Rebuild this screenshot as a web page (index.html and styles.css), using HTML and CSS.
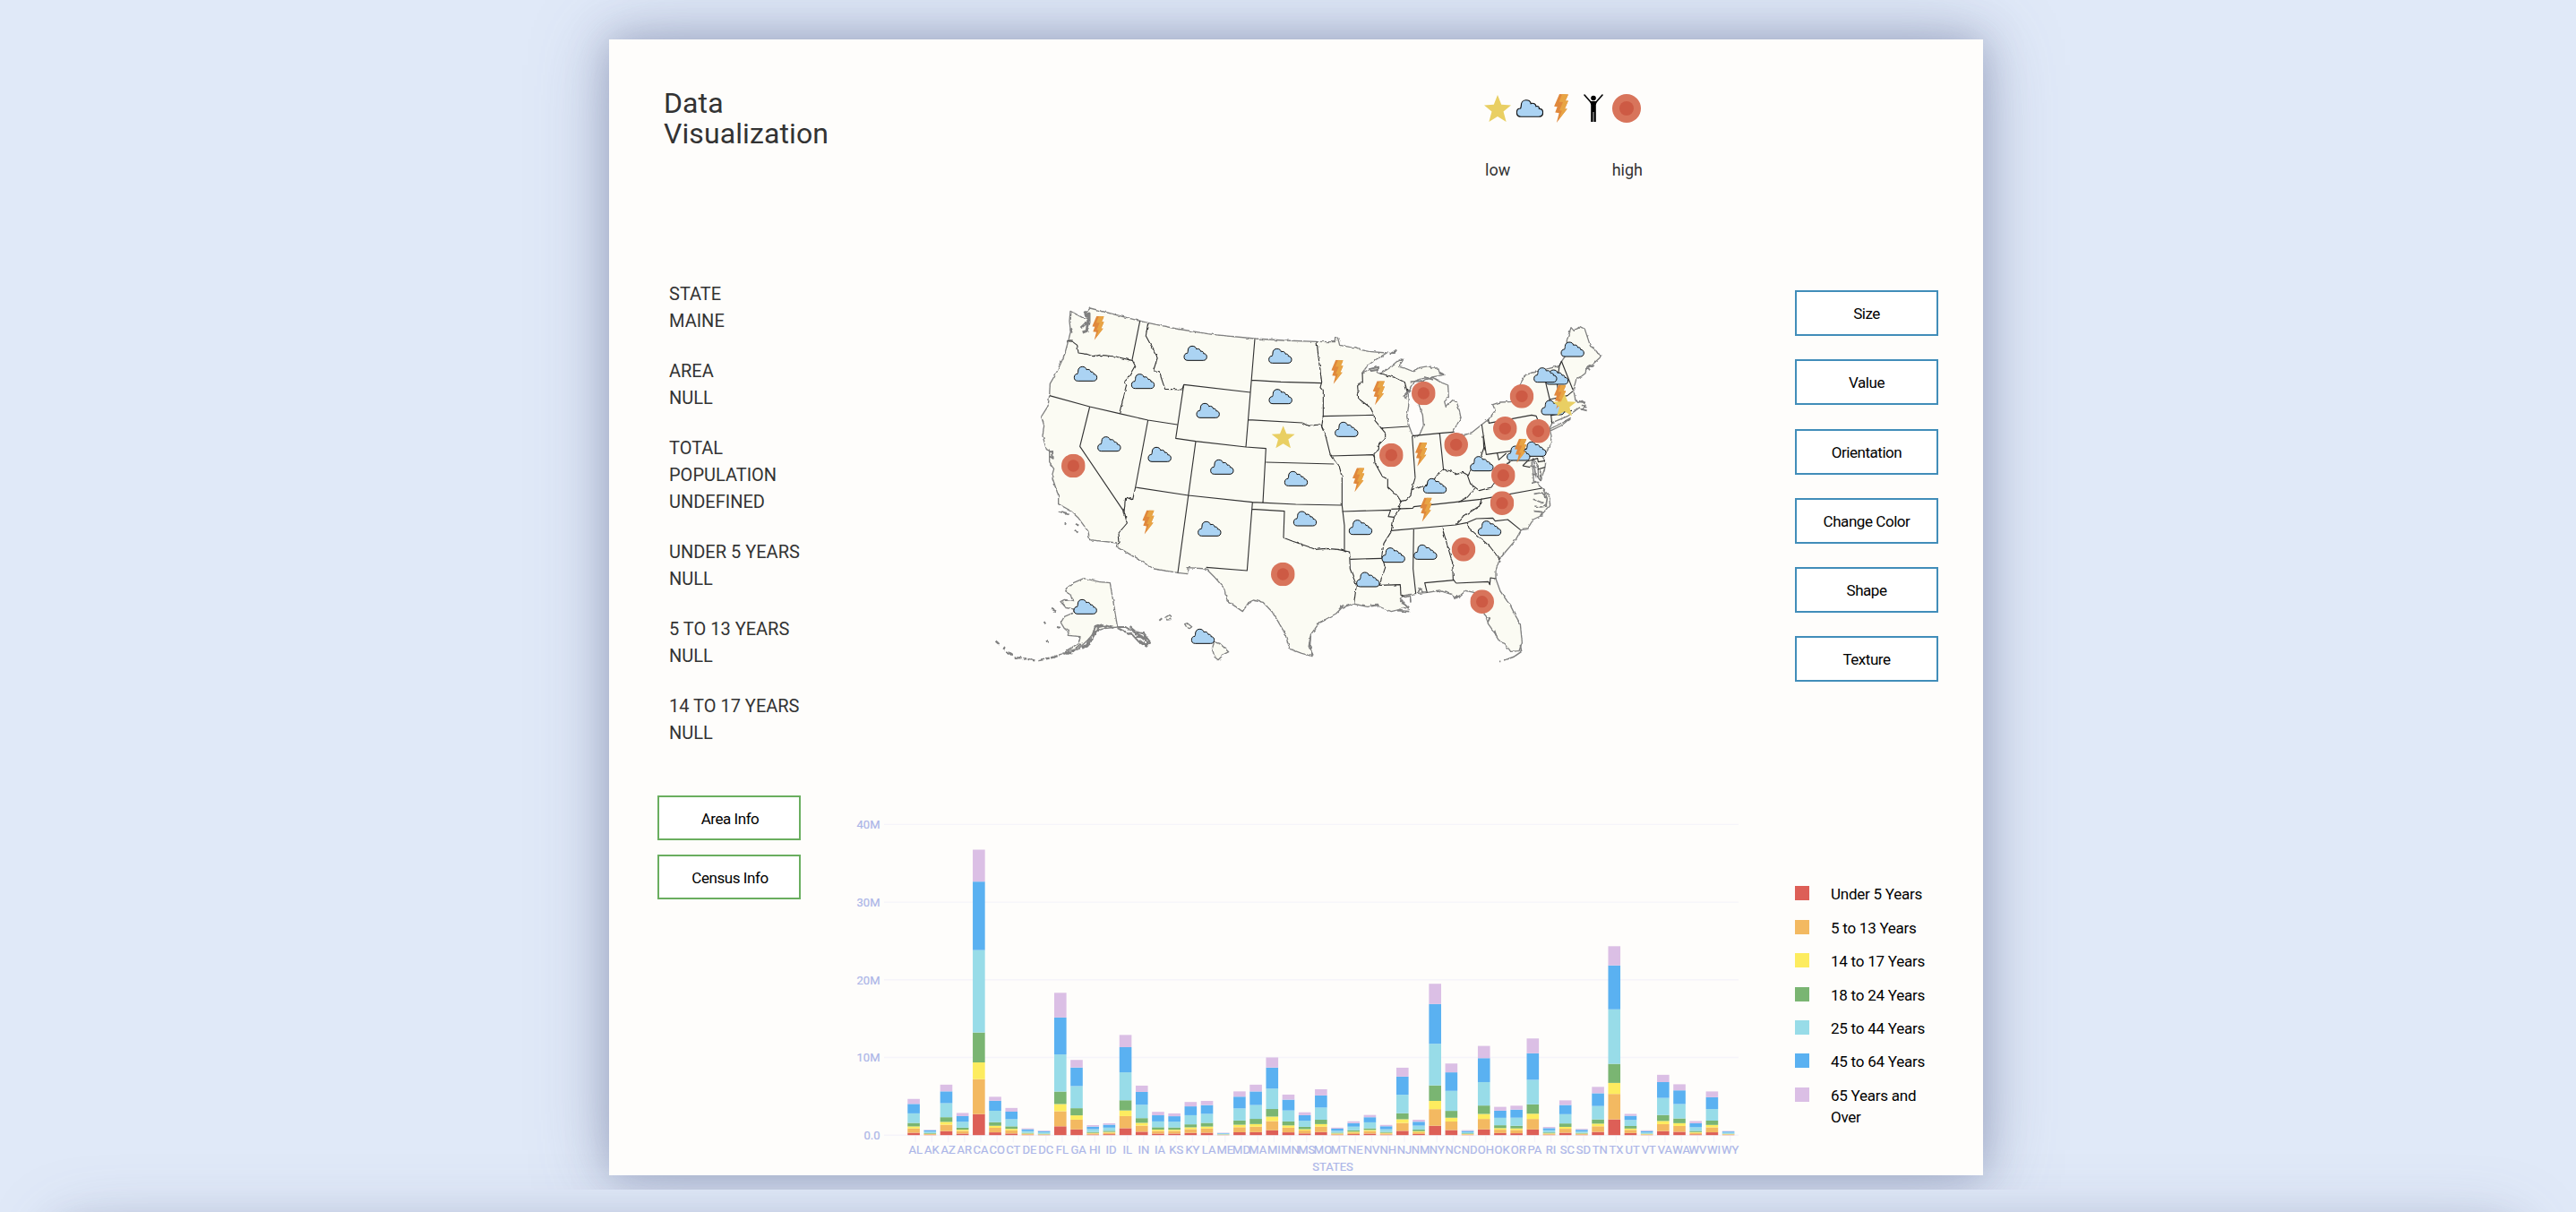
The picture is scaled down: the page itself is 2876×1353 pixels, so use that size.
FILE: index.html
```html
<!DOCTYPE html>
<html lang="en">
<head>
<meta charset="utf-8">
<title>Data Visualization</title>
<link rel="stylesheet" href="styles.css">
</head>
<body>
<svg class="defs" width="0" height="0" aria-hidden="true">
  <defs>
    <symbol id="cloud" viewBox="0 0 78 50" overflow="visible"><path d="M13 49C4 49 1 43 1 37C1 30 5 25 12 25C13 22 14 20 14 15C14 7 20 1 28 1C36 1 41 5 42 11C50 8 56 13 57 19C62 17 67 21 66 26C73 26 77 31 77 37C77 44 73 49 65 49Z" fill="#abd3f3" stroke="#111" stroke-width="3"/></symbol>
    <symbol id="bolt" viewBox="0 0 40 81"><path d="M15 0L40 1L32 19L40 19L30 42L37 42L7 81L14 54L3 52L9 36L0 35Z" fill="#e0883c"/><path d="M23 0L40 1L32 19L40 19L30 42L37 42L13 72L22 47L15 46L25 23L14 22Z" fill="#e8a444"/></symbol>
    <symbol id="star" viewBox="0 0 78 75" preserveAspectRatio="none"><path d="M39 0L50 27L78 29L56 46L64 75L39 60L14 75L22 46L0 29L28 27Z" fill="#e9cf63"/></symbol>
    <symbol id="dot" viewBox="0 0 80 80"><circle cx="40" cy="40" r="40" fill="#d8745b"/><circle cx="40" cy="40" r="20" fill="#cd5a44"/></symbol>
    <symbol id="person" viewBox="0 0 22 32"><circle cx="11" cy="4.5" r="2.8"/><path d="M1 1L8 9M21 1L14 9" stroke="#000" stroke-width="1.6" stroke-linecap="round"/><path d="M7 8H15L13.8 12V31H11.4V20H10.6V31H8.2V12Z"/></symbol>
    <filter id="rough" x="-5%" y="-5%" width="110%" height="110%" color-interpolation-filters="sRGB"><feTurbulence type="fractalNoise" baseFrequency="0.07" numOctaves="1" seed="4"/><feDisplacementMap in="SourceGraphic" scale="10" xChannelSelector="R" yChannelSelector="G"/></filter>
  </defs>
</svg>

<div class="panel">
  <section class="info">
    <h1>Data<br>Visualization</h1>
    <dl>
      <div><dt>STATE</dt><dd>MAINE</dd></div>
      <div><dt>AREA</dt><dd>NULL</dd></div>
      <div><dt>TOTAL<br>POPULATION</dt><dd>UNDEFINED</dd></div>
      <div><dt>UNDER 5 YEARS</dt><dd>NULL</dd></div>
      <div><dt>5 TO 13 YEARS</dt><dd>NULL</dd></div>
      <div><dt>14 TO 17 YEARS</dt><dd>NULL</dd></div>
    </dl>
    <div class="info-buttons">
      <button class="btn green">Area Info</button>
      <button class="btn green">Census Info</button>
    </div>
  </section>

  <section class="graphics">
    <div class="scale">
      <div class="scale-icons">
        <svg width="30" height="30"><use href="#star"/></svg>
        <svg width="30" height="20"><use href="#cloud"/></svg>
        <svg width="30" height="32"><use href="#bolt"/></svg>
        <svg width="30" height="32"><use href="#person"/></svg>
        <svg width="32" height="32"><use href="#dot"/></svg>
      </div>
      <div class="scale-labels"><span>low</span><span>high</span></div>
    </div>

    <svg class="map" viewBox="0 0 2280 1320">
      <g class="coast" filter="url(#rough)">
        <path class="land" d="M345 82L385 103L404 108L400 85L411 72L578 115L605 121L700 141L820 160L963 174L1060 180L1170 184L1231 185L1232 168L1241 172L1247 196L1280 202L1300 203L1320 212L1345 217L1405 222L1370 243L1340 265L1323 288L1350 276L1378 268L1372 287L1383 291L1410 275L1440 250L1452 243L1460 244L1445 268L1470 275L1495 285L1515 271L1550 265L1553 273L1578 273L1580 285L1598 295L1565 301L1525 308L1500 316L1487 335L1478 352L1468 375L1464 368L1476 345L1480 362L1478 400L1472 435L1480 468L1490 495L1500 506L1515 495L1528 465L1525 430L1515 405L1508 370L1517 335L1530 313L1560 305L1585 320L1610 330L1612 370L1598 385L1603 403L1625 380L1638 384L1648 415L1653 440L1638 465L1627 487L1645 495L1670 495L1690 488L1723 462L1745 445L1768 415L1760 395L1785 387L1830 385L1850 350L1852 325L1870 295L1895 288L1983 265L1992 248L2008 225L2008 180L2022 137L2032 148L2052 134L2068 142L2087 200L2100 205L2104 218L2125 232L2100 255L2075 270L2070 290L2057 300L2040 308L2030 345L2036 375L2045 388L2060 382L2072 395L2060 412L2050 405L2030 420L2012 433L1960 455L1950 475L1956 500L1954 525L1938 556L1922 540L1912 545L1930 575L1937 590L1935 605L1920 650L1912 640L1912 600L1895 575L1890 590L1895 620L1897 650L1925 675L1948 700L1952 730L1920 768L1895 780L1876 812L1855 815L1835 850L1805 885L1783 912L1770 950L1770 978L1785 1020L1820 1070L1835 1100L1852 1130L1858 1190L1848 1220L1820 1222L1800 1195L1785 1190L1770 1165L1745 1130L1732 1098L1720 1050L1700 1025L1670 1018L1650 1035L1635 1045L1620 1030L1580 1017L1535 1025L1500 1028L1460 1035L1450 1045L1465 1065L1480 1080L1460 1075L1445 1082L1420 1088L1400 1080L1370 1068L1340 1072L1292 1062L1255 1075L1235 1095L1180 1125L1150 1165L1148 1200L1155 1238L1120 1228L1080 1213L1063 1160L1040 1120L1020 1088L990 1057L958 1050L942 1058L922 1088L870 1052L860 1010L830 975L800 945L738 941L737 962L705 958L625 945L497 868L500 858L410 848L405 820L372 775L345 750L305 728L305 700L283 635L290 610L275 590L275 550L265 545L252 500L257 465L248 435L270 400L275 365L277 325L300 285L325 230L338 182L346 150L342 115Z"/>
        <path class="land" d="M478 992L440 988L390 977L355 992L330 1012L345 1035L357 1052L325 1048L312 1055L330 1075L357 1080L355 1092L325 1105L313 1125L325 1145L340 1150L337 1168L378 1172L372 1195L330 1220L370 1215L405 1182L430 1152L460 1145L503 1140Z"/>
        <path class="land" d="M827 1190L848 1197L875 1223L858 1232L840 1250L828 1240L820 1212ZM663 1108L672 1102L684 1106L680 1115L668 1116ZM728 1130L737 1127L752 1139L744 1145L735 1141ZM1950 477L1975 465L2020 440L1990 465L1955 482Z"/>
        <path d="M393 82L400 100L408 90L408 120L402 140M405 108L400 148L386 153M380 138L398 122" stroke-width="9"/>
        <path d="M275 553L285 552L287 575L277 568M1348 276L1378 270M1350 283L1376 278M1415 227L1438 212M345 140L350 155M643 1118L652 1111M282 1079L297 1087M305 752L338 760M363 795L373 800M360 815L367 824M326 793L331 796M257 1122L262 1129M265 1182L270 1192M300 1140L312 1142M408 1200L420 1175L440 1140L465 1135L490 1143M418 1170L428 1140L450 1132L466 1143" stroke-width="6"/>
        <path d="M95 1187L105 1196M120 1210L126 1213M130 1220L152 1235M158 1243L180 1243L230 1253M235 1252L290 1241L320 1230L355 1220L385 1192" stroke-width="7" stroke-dasharray="24 5 12 4"/>
        <path d="M330 1228L352 1226M384 1210L402 1200L408 1182L420 1180" stroke-width="9"/>
        <path d="M503 1140L530 1140L550 1152L590 1162L612 1190L600 1205L575 1190L552 1165L520 1152L503 1143M545 1140L570 1160M562 1172L590 1175L608 1198M570 1165L606 1192M578 1185L596 1200L606 1190M555 1155L602 1180" stroke-width="6"/>
        <path d="M2070 275L2090 265L2100 262M2076 268L2085 280M2055 410L2075 415M2050 385L2070 388M2058 397L2074 405M1885 600L1908 606M1890 628L1908 630M1893 655L1915 656M1895 580L1905 640M1920 612L1918 648M1898 694L1925 690L1938 705M1895 712L1930 725M1900 735L1920 738L1942 735M1898 752L1925 755L1925 770M1930 680L1942 710L1938 735M1735 1105L1750 1110L1742 1125M1765 1150L1772 1170M1852 1200L1856 1222L1830 1240L1798 1252M1782 1255L1786 1255M1465 1040L1483 1035L1485 1058M1440 1085L1480 1088M1450 1050L1480 1078M1350 1065L1375 1064L1378 1074M1510 1025L1516 1010L1526 1025M1245 1080L1260 1066M1150 1170L1144 1205L1158 1235M1170 1130L1200 1115M1630 1042L1650 1035M1484 318L1530 316M1530 302L1560 312M1465 362L1485 345M1580 290L1600 295" stroke-width="5"/>
      </g>
      <g class="borders">
        <g filter="url(#rough)">
          <path d="M338 182L352 184L368 196L372 222L400 226L420 233L445 229L495 234L552 247M552 245L562 265L540 303L527 318L533 328L509 425M605 121L598 165L637 237L623 282L642 283L662 343L720 345L725 328M563 672L554 713L530 706L525 754L535 792L507 825L510 857L497 868M1059 841L1090 853L1140 870L1165 880L1200 877L1240 880L1280 888M1122 456L1140 466L1182 462L1195 478M1170 184L1178 250L1187 320L1182 338L1192 350L1192 433L1187 470L1200 500L1215 560L1245 600L1255 635L1255 732M1323 288L1324 318L1307 332L1310 375L1350 405L1362 430L1365 448L1400 490L1400 505L1378 530L1378 545L1362 560L1365 590L1390 635L1408 645L1408 670L1440 700L1453 720L1445 745L1428 775L1420 820L1395 860L1388 905L1400 940L1380 1000L1450 998L1452 1030L1465 1040M1383 291L1435 305L1465 320L1473 350M1500 640L1488 680L1530 668L1560 650L1575 630L1595 612L1620 618L1640 628L1660 622L1678 632L1690 605L1720 570L1730 540L1728 500M1500 640L1488 680L1485 700L1470 715L1453 718M1675 632L1685 660L1715 683L1755 672L1785 630L1810 590L1835 575M1700 675L1675 705L1645 722M1722 712L1715 735L1660 770L1635 797M1675 792L1680 808L1710 835L1750 870L1782 912M1263 887L1280 888L1282 945L1303 1000L1295 1062M1590 806L1625 925L1627 980L1637 993"/>
        </g>
        <path d="M578 115L552 245M605 447L563 672M275 365L410 402L509 425L605 447L703 462M725 328L948 354M963 174L933 537M725 328L698 508L765 518L933 537L1000 542L990 724M953 313L1050 319L1187 323M942 446L1122 456M1000 588L1228 594M410 402L377 535L525 754M765 518L705 958M563 672L740 699L955 722L1100 729L1255 732M955 722L937 951L800 940M953 745L1062 752L1059 841M1190 434L1360 430M1215 567L1358 563L1365 572M1385 474L1478 468M1490 500L1500 640M1490 500L1582 491L1627 487M1582 491L1595 615M1723 462L1738 562L1910 538M1745 445L1747 457L1890 430L1905 433L1910 445L1925 452M1775 558L1780 580L1805 558M1420 745L1492 742L1495 737L1720 712L1925 675M1420 817L1635 798L1675 790L1705 777L1760 775L1768 785L1810 780L1853 815M1255 732L1263 800L1263 887M1255 753L1418 748L1410 770L1428 772M1282 913L1388 910M1495 813L1493 945L1502 1028M1637 993L1745 988L1750 998L1752 975L1770 978M1540 1025L1532 992L1630 983M1935 275L1938 325L1950 375L1955 430L1958 458M1983 265L1990 250L2028 345M1983 265L1975 320L1980 365M1950 378L2010 365L2028 350M1955 432L2005 418L2025 415M1860 600L1875 585L1910 575L1912 587L1935 583M1910 612L1935 605M1860 600L1885 605"/>
      </g>
      <g id="markers"></g>
    </svg>

    <svg class="chart" width="1000" height="420" viewBox="960 892 1000 420"></svg>
  </section>

  <section class="controls">
    <div class="encodings">
      <button class="btn">Size</button>
      <button class="btn">Value</button>
      <button class="btn">Orientation</button>
      <button class="btn">Change Color</button>
      <button class="btn">Shape</button>
      <button class="btn">Texture</button>
    </div>
    <ul class="legend">
      <li><i class="c0"></i>Under 5 Years</li>
      <li><i class="c1"></i>5 to 13 Years</li>
      <li><i class="c2"></i>14 to 17 Years</li>
      <li><i class="c3"></i>18 to 24 Years</li>
      <li><i class="c4"></i>25 to 44 Years</li>
      <li><i class="c5"></i>45 to 64 Years</li>
      <li><i class="c6"></i>65 Years and Over</li>
    </ul>
  </section>
</div>
<div class="next"><div class="next-card"></div></div>
<script src="script.js"></script>
</body>
</html>
```

FILE: styles.css
```css
* { box-sizing: border-box; }
html, body { margin: 0; height: 1353px; overflow: hidden; }
body { background: #e0e9f8; font-family: Roboto, "Noto Sans", sans-serif; color: #333; padding-top: 44px; }
.defs { position: absolute; }

.panel {
  position: relative;
  z-index: 1;
  display: flex;
  width: 1534px;
  height: 1268px;
  margin-left: 680px;
  background: #fefdfb;
  box-shadow: 0 0 80px rgba(90, 100, 140, .36), 0 0 40px rgba(90, 100, 140, .34);
  clip-path: inset(-44px -100px -16px -100px);
}

.info { width: 270px; padding: 54px 0 0 54px; }
h1 { margin: 0 0 0 7px; font-size: 32px; line-height: 34px; font-weight: 400; letter-spacing: .1px; }
dl { margin: 147px 0 0 13px; font-size: 20px; line-height: 30px; white-space: nowrap; }
dl > div { margin-bottom: 26px; }
dd { margin: 0; }
.info-buttons { display: grid; gap: 16px; margin-top: 55px; }

.btn {
  width: 160px;
  height: 51px;
  padding: 1px 0 0;
  border: 2px solid #418db9;
  background: #fff;
  font: 17px Roboto, sans-serif;
  letter-spacing: -.45px;
  color: #000;
}
.btn.green { height: 50px; padding-left: 2px; border-color: #6aae5f; }

.graphics { width: 1010px; padding-left: 10px; display: flex; flex-direction: column; }
.scale { height: 276px; padding: 61px 0 0 697px; }
.scale-icons { display: flex; align-items: center; gap: 5.7px; height: 32px; }
.scale-labels { display: flex; justify-content: space-between; width: 176px; margin: 41px 0 0 1px; font-size: 18px; line-height: 24px; }
.map { width: 760px; height: 440px; margin-left: 120px; }
.chart { margin-top: 132px; overflow: visible; }

.land { fill: #fbfbf3; }
.coast { fill: none; stroke: #808080; stroke-width: 4; stroke-linejoin: round; }
.borders { fill: none; stroke: #333; stroke-width: 3.4; stroke-linejoin: round; }

.chart text { font-size: 13px; fill: #acb6e8; stroke: #acb6e8; stroke-width: .2px; }
.grid { stroke: #f5f4fa; stroke-width: 1.4; }
.c0 { fill: #dd5f57; background: #dd5f57; }
.c1 { fill: #f3b961; background: #f3b961; }
.c2 { fill: #fdec5f; background: #fdec5f; }
.c3 { fill: #7ab572; background: #7ab572; }
.c4 { fill: #98dce8; background: #98dce8; }
.c5 { fill: #5ab1f1; background: #5ab1f1; }
.c6 { fill: #dbbfe5; background: #dbbfe5; }

.controls { width: 210px; padding: 280px 0 0 44px; }
.encodings { display: grid; gap: 26.3px; }
.legend { list-style: none; margin: 225px 0 0; padding: 0; font-size: 17px; line-height: 24px; letter-spacing: -.25px; color: #000; }
.legend li { display: flex; align-items: flex-start; gap: 24px; width: 150px; margin-bottom: 13.4px; }
.legend i { flex: none; width: 16px; height: 16px; margin-top: 3px; }

.next { height: 121px; margin-top: -80px; padding: 144px 70px 0; overflow: hidden; }
.next-card {
  height: 100px;
  box-shadow: 0 0 80px rgba(90, 100, 140, .36), 0 0 40px rgba(90, 100, 140, .34);
}
```

FILE: script.js
```js
const NS = 'http://www.w3.org/2000/svg';
function add(parent, tag, attrs, text) {
  const el = document.createElementNS(NS, tag);
  for (const k in attrs) el.setAttribute(k, attrs[k]);
  if (text) el.textContent = text;
  parent.appendChild(el);
}

// Marker centres on the map, drawn in this order.
const sizes = { cloud: [78, 50], dot: [80, 80], bolt: [40, 81], star: [78, 75] };
const markers = {
  cloud: [[396,292],[588,317],[764,223],[1048,232],[1049,368],[806,415],[475,527],[644,562],[853,604],[1101,643],[1131,777],[811,811],[395,1072],[789,1171],[1270,478],[1317,806],[1427,899],[1534,889],[1342,981],[1566,667],[1723,593],[1749,809],[2027,210],[1974,303],[1936,296],[1961,405],[1900,544],[1846,558]],
  dot: [[355,600],[1057,963],[1420,564],[1528,357],[1637,529],[1662,880],[1724,1055],[1857,367],[1801,475],[1912,484],[1795,632],[1791,725]],
  bolt: [[438,139],[606,789],[1239,286],[1378,356],[1310,647],[1520,562],[1536,747],[1853,550],[1985,370]],
  star: [[1058,503],[2000,395]]
};
const layer = document.getElementById('markers');
for (const kind in markers) {
  const [w, h] = sizes[kind];
  for (const [x, y] of markers[kind]) add(layer, 'use', { href: '#' + kind, x: x - w / 2, y: y - h / 2, width: w, height: h });
}

// Population by age group.
const data = `AL,310504,552339,259034,450818,1231572,1215966,641667
AK,52083,85640,42153,74257,198724,183159,50277
AZ,515910,828669,362642,601943,1804762,1523681,862573
AR,202070,343207,157204,264160,754420,727124,407205
CA,2704659,4499890,2159981,3853788,10604510,8819342,4114496
CO,358280,587154,261701,466194,1464939,1290094,511094
CT,211637,403658,196918,325110,916955,968967,478007
DE,59319,99496,47414,84464,230183,230528,121688
DC,36352,50439,25225,75569,193557,140043,70648
FL,1140516,1938695,925060,1607297,4782119,4746856,3187797
GA,740521,1250460,557860,919876,2846985,2389018,981024
HI,87207,134025,64011,124834,356237,331817,190067
ID,121746,201192,89702,147606,406247,375173,182150
IL,894368,1558919,725973,1311479,3596343,3239173,1575308
IN,443089,780199,361393,605863,1724528,1647881,813839
IA,201321,345409,165883,306398,750505,788485,444554
KS,202529,342134,155822,293114,728166,713663,366706
KY,284601,493536,229927,381394,1179637,1134283,565867
LA,310716,542341,254916,471275,1162463,1128771,540314
ME,20000,35000,25000,30000,80000,70000,50000
MD,371787,651923,316873,543470,1556225,1513754,679565
MA,383568,701752,341713,665879,1782449,1751508,871098
MI,625526,1179503,585169,974480,2628322,2706100,1304322
MN,358471,606802,289371,507289,1416063,1391878,650519
MS,220813,371502,174405,305964,764203,730133,371598
MO,399450,690476,331543,560463,1569626,1554812,805235
MT,61114,106088,53156,95232,236297,278241,137312
NE,132092,215265,99638,186657,457177,451756,240847
NV,199175,325650,142976,212379,769913,653357,296717
NH,75297,144235,73826,119114,345109,388250,169978
NJ,557421,1011656,478505,769321,2379649,2335168,1150941
NM,148323,241326,112801,203097,517154,501604,260051
NY,1208495,2141490,1058031,1999120,5355235,5120254,2607672
NC,652823,1097890,492964,883397,2575603,2380685,1139052
ND,41896,67358,33794,82629,154913,166615,94276
OH,743750,1340492,646135,1081734,3019147,3083815,1570837
OK,266547,438926,200562,369916,957085,918688,490637
OR,243483,424167,199925,338162,1044056,1036269,503998
PA,737462,1345341,679201,1203944,3157759,3414001,1910571
RI,60934,111408,56198,114502,277779,282321,147646
SC,303024,517803,245400,438147,1193112,1186019,596295
SD,58566,94438,45305,82869,196738,210178,116100
TN,416334,725948,336312,550612,1719433,1646623,819626
TX,2027307,3277946,1420518,2454721,7017731,5656528,2472223
UT,268916,413034,167685,329585,772024,538978,246202
VT,32635,62538,33757,61679,155419,188593,86649
VA,522672,887525,413004,768475,2203286,2033550,940577
WA,433119,750274,357782,610378,1850983,1762811,783877
WV,105435,189649,91074,157989,470749,514505,285067
WI,362277,640286,311849,553914,1487457,1522038,750146
WY,38253,60890,29314,53980,137338,147279,65614`.split('\n').map(r => r.split(','));

const chart = document.querySelector('.chart');
const base = 1267.2, step = 86.7, pitch = 18.19;
['0.0', '10M', '20M', '30M', '40M'].forEach((label, i) => {
  const y = base - i * step;
  add(chart, 'line', { class: 'grid', x1: 987, x2: 1941, y1: y, y2: y });
  add(chart, 'text', { x: 982.5, y: y + 4.7, 'text-anchor': 'end' }, label);
});
data.forEach(([state, ...groups], i) => {
  const x = 1013.3 + i * pitch;
  add(chart, 'line', { class: 'grid', x1: x + 8.9, x2: x + 8.9, y1: base, y2: base + 8 });
  let y = base;
  groups.forEach((n, g) => {
    const h = n / 1e7 * step;
    y -= h;
    add(chart, 'rect', { class: 'c' + g, x, y, width: 13.6, height: h });
  });
  add(chart, 'text', { x: x + 8.9, y: 1287.7, 'text-anchor': 'middle' }, state);
});
add(chart, 'text', { x: 1488, y: 1306.7, 'text-anchor': 'middle' }, 'STATES');
```
